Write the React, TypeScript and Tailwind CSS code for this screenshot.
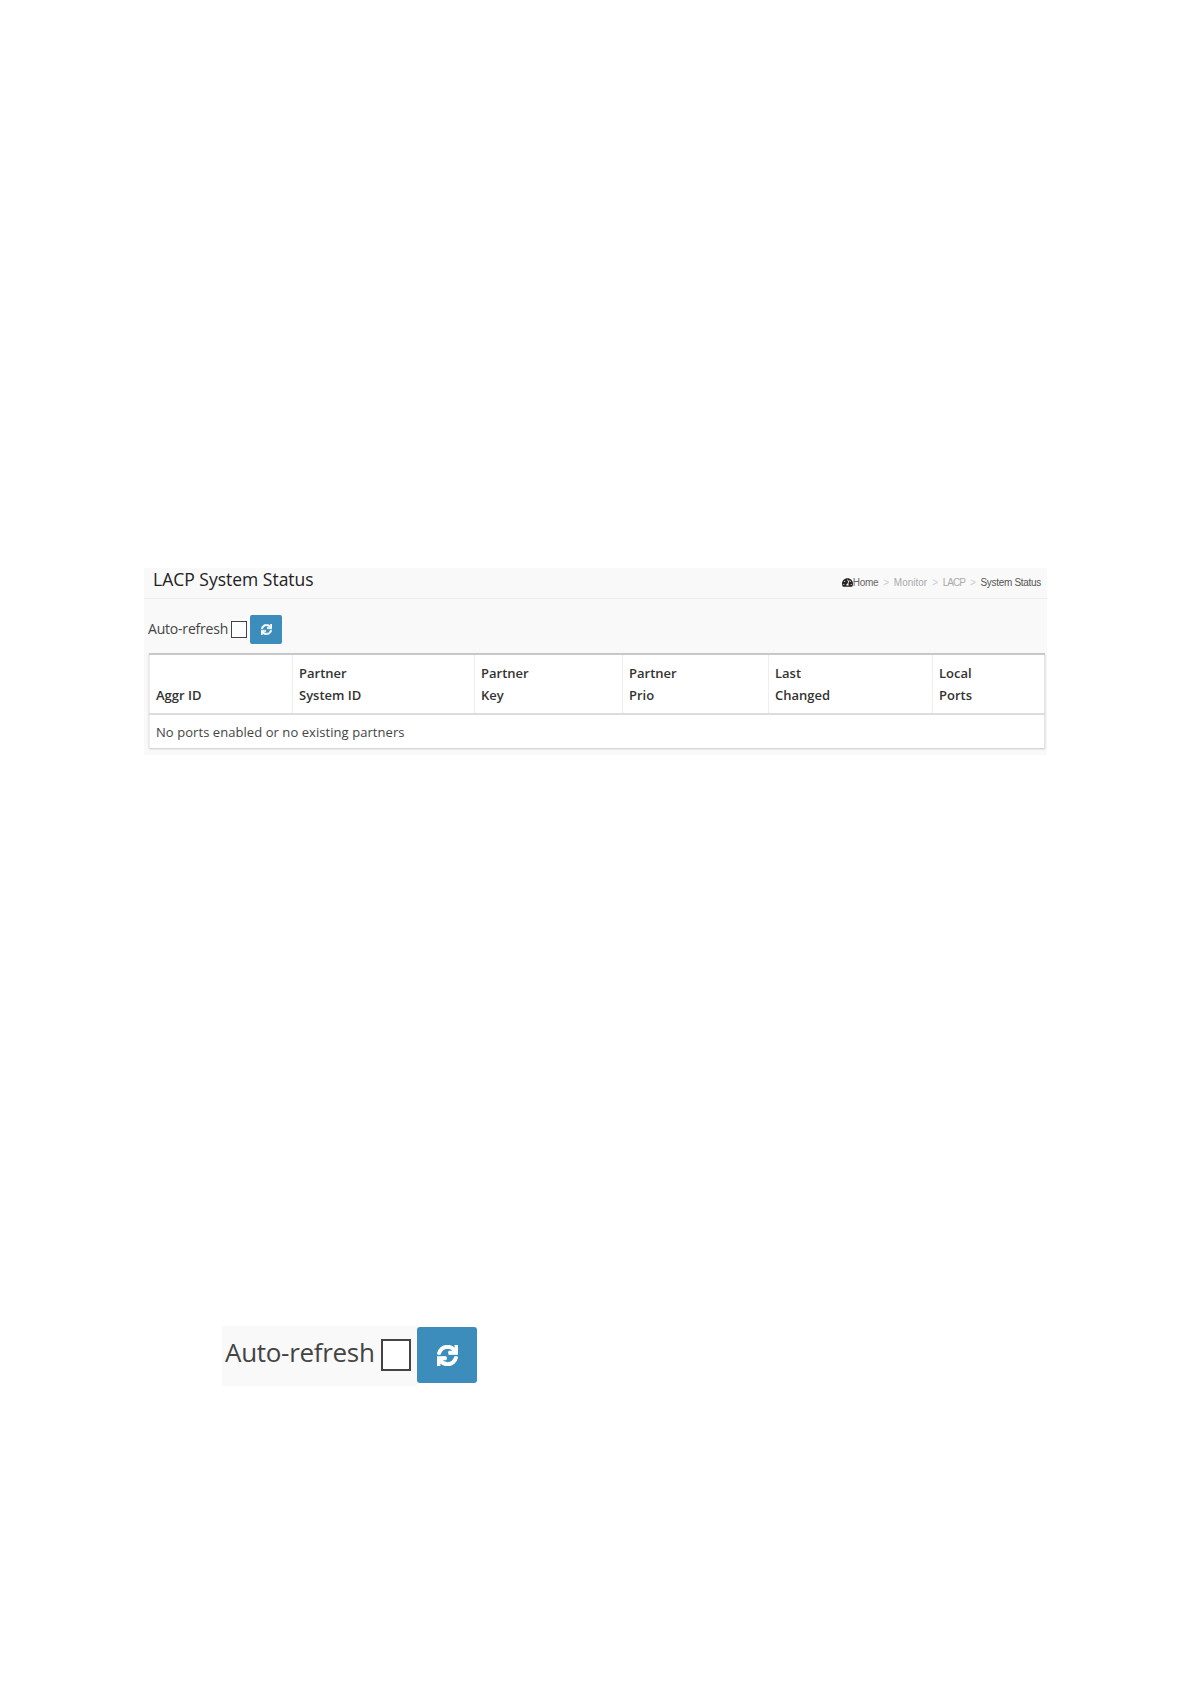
import React from "react";
import { FaSync, FaTachometerAlt } from "react-icons/fa";

const columns = [
  { top: "", bottom: "Aggr ID", width: "w-[143px]" },
  { top: "Partner", bottom: "System ID", width: "w-[182px]" },
  { top: "Partner", bottom: "Key", width: "w-[148px]" },
  { top: "Partner", bottom: "Prio", width: "w-[146px]" },
  { top: "Last", bottom: "Changed", width: "w-[164px]" },
  { top: "Local", bottom: "Ports", width: "w-[112px]" },
];

export default function App() {
  return (
    <div className="min-h-[1684px] bg-white font-['Open_Sans',sans-serif] pt-[568px]">
      <div className="ml-[144px] w-[903px] h-[187px] bg-[#f9f9f9]">
        <div className="h-[31px] flex items-center justify-between pl-[9px] pr-[6px] border-b border-[#ececec]">
          <h1 className="text-[17.5px] leading-[24px] text-[#222] -mt-[9px]">LACP System Status</h1>
          <div className="flex items-center text-[10px] tracking-[-0.3px] text-[#aaa] font-['Liberation_Sans',sans-serif] -mt-[2px]">
            <FaTachometerAlt className="text-[#222] text-[11px]" />
            <span className="text-[#666]">Home</span>
            <span className="mx-[5px] text-[#ccc]">&gt;</span>
            <span className="tracking-normal">Monitor</span>
            <span className="mx-[5px] text-[#ccc]">&gt;</span>
            <span className="tracking-[-1px]">LACP</span>
            <span className="mx-[5px] text-[#ccc]">&gt;</span>
            <span className="text-[#555]">System Status</span>
          </div>
        </div>
        <div className="flex items-center pl-[4px] h-[54px] pt-[6px]">
          <span className="text-[14px] text-[#444] tracking-[-0.2px] -mt-[1px]">Auto-refresh</span>
          <span className="ml-[3px] w-[16px] h-[17px] bg-white border border-[#444]" />
          <button className="ml-[3px] w-[32px] h-[29px] rounded-[2px] bg-[#3c8dbc] flex items-center justify-center text-white text-[11px]">
            <FaSync stroke="currentColor" strokeWidth={25} />
          </button>
        </div>
        <table className="ml-[5px] w-[895px] table-fixed border-collapse bg-white text-[13px] text-[#333] shadow-[0_1px_2px_rgba(0,0,0,0.2)]">
          <thead>
            <tr className="h-[60px] border-t-2 border-b-2 border-t-[#c8c8c8] border-b-[#dcdcdc]">
              {columns.map((c, i) => (
                <th
                  key={i}
                  className={`${c.width} align-bottom text-left font-semibold leading-[22px] pl-[6px] pr-[7px] pb-[7px] border-r border-[#eee] last:border-r-[#e4e4e4] first:border-l first:border-l-[#eee]`}
                >
                  {c.top && <div>{c.top}</div>}
                  <div>{c.bottom}</div>
                </th>
              ))}
            </tr>
          </thead>
          <tbody>
            <tr className="h-[34px]">
              <td colSpan={6} className="pl-[6px] pt-[2px] tracking-[0.06px] text-[#444] border-x border-x-[#eee] border-r-[#e4e4e4]">
                No ports enabled or no existing partners
              </td>
            </tr>
          </tbody>
        </table>
      </div>

      <div className="mt-[571px] ml-[222px] flex items-center">
        <div className="w-[195px] h-[60px] bg-[#f9f9f9] flex items-center pl-[3px]">
          <span className="text-[26px] text-[#444] tracking-[-0.3px] -mt-[8px]">Auto-refresh</span>
          <span className="ml-[6px] -mt-[2px] w-[30px] h-[32px] bg-white border-2 border-[#444]" />
        </div>
        <button className="ml-0 -mt-[2px] w-[60px] h-[56px] rounded-[3px] bg-[#3c8dbc] flex items-center justify-center text-white text-[21px]">
          <FaSync stroke="currentColor" strokeWidth={25} />
        </button>
      </div>
    </div>
  );
}
